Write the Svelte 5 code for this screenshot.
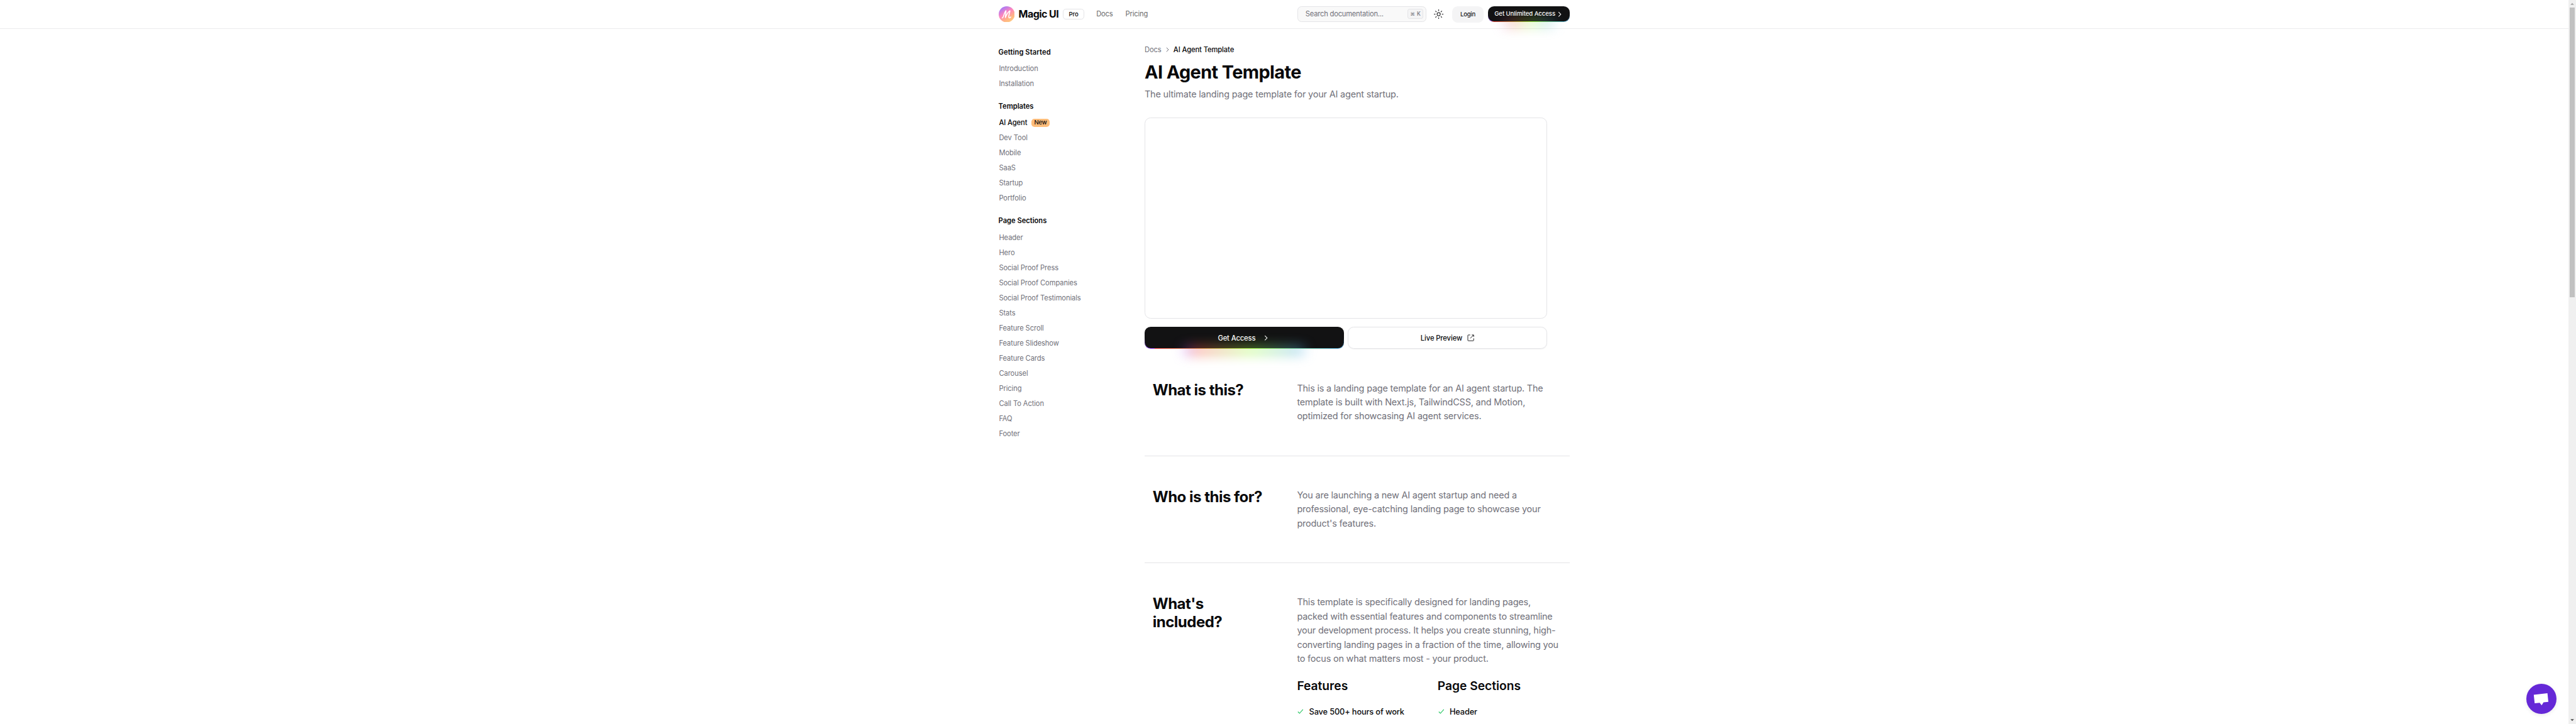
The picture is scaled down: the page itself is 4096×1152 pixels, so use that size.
<script>
  const groups = [
    { title: 'Getting Started', cls: 'loose', items: ['Introduction', 'Installation'] },
    { title: 'Templates', cls: '', items: ['AI Agent', 'Dev Tool', 'Mobile', 'SaaS', 'Startup', 'Portfolio'] },
    {
      title: 'Page Sections',
      cls: '',
      items: [
        'Header', 'Hero', 'Social Proof Press', 'Social Proof Companies', 'Social Proof Testimonials',
        'Stats', 'Feature Scroll', 'Feature Slideshow', 'Feature Cards', 'Carousel', 'Pricing',
        'Call To Action', 'FAQ', 'Footer'
      ]
    }
  ];

  const sections = [
    {
      title: ['What is this?'],
      lines: [
        'This is a landing page template for an AI agent startup. The',
        'template is built with Next.js, TailwindCSS, and Motion,',
        'optimized for showcasing AI agent services.'
      ]
    },
    {
      title: ['Who is this for?'],
      lines: [
        'You are launching a new AI agent startup and need a',
        'professional, eye-catching landing page to showcase your',
        "product's features."
      ]
    },
    {
      title: ["What's", 'included?'],
      lines: [
        'This template is specifically designed for landing pages,',
        'packed with essential features and components to streamline',
        'your development process. It helps you create stunning, high-',
        'converting landing pages in a fraction of the time, allowing you',
        'to focus on what matters most - your product.'
      ],
      columns: [
        { title: 'Features', item: 'Save 500+ hours of work' },
        { title: 'Page Sections', item: 'Header' }
      ]
    }
  ];
</script>

<div class="screen">
  <div class="page">
    <header>
      <div class="wrap bar">
        <svg class="logo" viewBox="0 0 32 32">
          <defs>
            <linearGradient id="brand" x1="0.15" y1="0.05" x2="0.75" y2="1">
              <stop offset="0" stop-color="#9c78ff" />
              <stop offset="0.42" stop-color="#ff86bd" />
              <stop offset="0.75" stop-color="#ffb583" />
              <stop offset="1" stop-color="#ffcb80" />
            </linearGradient>
          </defs>
          <circle cx="16" cy="16" r="16" fill="url(#brand)" />
          <path
            d="M7 23.2C8.2 23.4 9.2 21 10.3 17.6C11.5 13.8 12.6 10 14.4 8.8C14.7 12.8 13.2 18 13.3 22.6C15.2 17.6 18.2 11.6 22.3 9C22.2 12.6 19.2 19 20.2 22.2C20.8 23.8 22.8 22.9 24 21.2"
            fill="none" stroke="#fff" stroke-width="1.9" stroke-linecap="round" stroke-linejoin="round" />
        </svg>
        <span class="brand">Magic UI</span>
        <span class="pro">Pro</span>
        <nav>
          <span>Docs</span>
          <span>Pricing</span>
        </nav>
        <div class="search">
          <span>Search documentation...</span>
          <kbd><i>⌘</i>K</kbd>
        </div>
        <svg class="sun" viewBox="-12 -12 24 24">
          <circle r="3.2" />
          <path d="M0-9.4V-6.4M0 9.4V6.4M-9.4 0H-6.4M9.4 0H6.4M-6.5-6.5-4.3-4.3M6.5 6.5 4.3 4.3M-6.5 6.5-4.3 4.3M6.5-6.5 4.3-4.3" />
        </svg>
        <span class="login">Login</span>
        <div class="rainbow small">
          <span>Get Unlimited Access</span>
          <svg viewBox="0 0 8 12"><path d="M1.5 1.5 6 6 1.5 10.5" /></svg>
        </div>
      </div>
    </header>

    <div class="wrap body">
      <aside>
        {#each groups as g}
          <section class="group">
            <h4 class={g.cls}>{g.title}</h4>
            {#each g.items as item}
              <div class="link" class:active={item === 'AI Agent'}>
                <span>{item}</span>
                {#if item === 'AI Agent'}<b>New</b>{/if}
              </div>
            {/each}
          </section>
        {/each}
      </aside>

      <main>
        <div class="crumbs">
          <span>Docs</span>
          <svg viewBox="0 0 6 10"><path d="M1 1 5 5 1 9" /></svg>
          <strong>AI Agent Template</strong>
        </div>
        <h1>AI Agent Template</h1>
        <p class="lead">The ultimate landing page template for your AI agent startup.</p>
        <div class="preview"></div>
        <div class="actions">
          <div class="rainbow">
            <span>Get Access</span>
            <svg viewBox="0 0 8 12"><path d="M1.5 1.5 6 6 1.5 10.5" /></svg>
          </div>
          <div class="live">
            <span>Live Preview</span>
            <svg viewBox="0 0 14 14"><path d="M6 1.2H2.3Q1.2 1.2 1.2 2.3V11.7Q1.2 12.8 2.3 12.8H11.7Q12.8 12.8 12.8 11.7V8M9 1.2H12.8V5M12.8 1.2 6 8" /></svg>
          </div>
        </div>

        {#each sections as s}
          <section class="block">
            <h2>{#each s.title as t}<span>{t}</span>{/each}</h2>
            <div class="copy">
              {#each s.lines as l}<p>{l}</p>{/each}
              {#if s.columns}
                <div class="columns">
                  {#each s.columns as c}
                    <div>
                      <h3>{c.title}</h3>
                      <div class="check">
                        <svg viewBox="0 0 12 10"><path d="M1 5.6 4.2 8.8 11 1" /></svg>
                        <span>{c.item}</span>
                      </div>
                    </div>
                  {/each}
                </div>
              {/if}
            </div>
          </section>
        {/each}
      </main>
    </div>
  </div>

  <div class="scrollbar">
    <svg viewBox="0 0 15 15"><path d="M4 9.7H11L7.5 6Z" fill="#a3a3a3" /></svg>
    <div class="thumb"></div>
    <svg viewBox="0 0 15 15"><path d="M4 5.3H11L7.5 9Z" fill="#505050" /></svg>
  </div>

  <div class="chat">
    <svg viewBox="0 0 60 60"><path d="M14.8 21.8 42 18.8 43.8 35.9 34.2 37 30.5 42.8 26.6 37.8 16.6 38.9Z" fill="#fff" /></svg>
  </div>
</div>

<style>
  :global(html),
  :global(body) {
    margin: 0;
    background: #fff;
    overflow: hidden;
  }
  .screen {
    zoom: 0.8;
    position: relative;
    display: flex;
    width: 5120px;
    height: 1440px;
    overflow: hidden;
    background: #fff;
    color: #09090b;
    font-family: Inter, 'Liberation Sans', sans-serif;
    font-size: 14px;
    line-height: 20px;
    white-space: nowrap;
  }
  .page {
    flex: 1;
    min-width: 0;
  }
  .wrap {
    width: 1136px;
    margin: 0 auto;
    display: flex;
  }
  svg {
    display: block;
    flex: none;
  }
  h1, h2, h3, h4, p {
    margin: 0;
  }

  header {
    height: 56px;
    border-bottom: 1px solid #ececed;
  }
  .bar {
    height: 56px;
    align-items: center;
  }
  .logo {
    width: 32px;
    height: 32px;
  }
  .brand {
    margin-left: 8px;
    width: 80px;
    font-size: 20px;
    font-weight: 700;
    letter-spacing: -0.0347em;
  }
  .pro {
    box-sizing: border-box;
    margin-left: 8.5px;
    width: 42px;
    height: 22px;
    border: 1px solid #e4e4e7;
    border-radius: 6px;
    text-align: center;
    font-size: 12px;
    font-weight: 500;
  }
  nav {
    display: flex;
    gap: 25px;
    margin-left: 24px;
    color: #6c6c6d;
    letter-spacing: -0.016em;
  }
  .search {
    box-sizing: border-box;
    display: flex;
    align-items: center;
    justify-content: space-between;
    width: 256px;
    height: 32px;
    margin-left: auto;
    padding: 0 4.5px 0 15px;
    border: 1px solid #e4e4e7;
    border-radius: 8px;
    background: #f9f9f9;
    color: #71717a;
    letter-spacing: -0.02em;
  }
  kbd {
    box-sizing: border-box;
    display: flex;
    align-items: center;
    justify-content: center;
    gap: 4px;
    width: 31px;
    height: 20px;
    border: 1px solid #e4e4e7;
    border-radius: 4px;
    background: #f4f4f5;
    font: 500 10.5px 'Inter', sans-serif;
    letter-spacing: 0;
  }
  kbd i {
    font: normal 9px 'DejaVu Sans', sans-serif;
  }
  .sun {
    width: 24px;
    height: 24px;
    margin: 0 14px 0 13.5px;
    fill: none;
    stroke: #18181b;
    stroke-width: 1.3;
  }
  .login {
    width: 63px;
    height: 33px;
    margin-top: 1px;
    border-radius: 11px;
    background: #f4f4f5;
    color: #18181b;
    text-align: center;
    font-size: 12px;
    font-weight: 500;
    line-height: 32px;
    letter-spacing: -0.0285em;
  }

  .rainbow {
    position: relative;
    box-sizing: border-box;
    display: flex;
    flex: none;
    align-items: center;
    justify-content: center;
    gap: 17px;
    width: 396px;
    height: 44px;
    padding-right: 5px;
    border: 1.28px solid transparent;
    border-radius: 12px;
    color: #fafafa;
    font-weight: 500;
    letter-spacing: -0.0105em;
    background:
      linear-gradient(#121213, #121213) padding-box,
      linear-gradient(#121213 50%, rgba(18, 18, 19, 0.6) 80%, rgba(18, 18, 19, 0)) border-box,
      linear-gradient(90deg, hsl(0 100% 63%), hsl(90 100% 63%), hsl(210 100% 63%), hsl(195 100% 63%), hsl(270 100% 63%)) border-box;
    background-size: 200%;
    background-position: -5% 0;
  }
  .rainbow::before {
    content: '';
    position: absolute;
    left: 20%;
    bottom: -20%;
    width: 60%;
    height: 20%;
    background: linear-gradient(90deg, hsl(0 100% 63%), hsl(90 100% 63%), hsl(210 100% 63%), hsl(195 100% 63%), hsl(270 100% 63%));
    background-size: 200%;
    background-position: -5% 0;
    filter: blur(12.8px);
  }
  .rainbow > * {
    position: relative;
  }
  .rainbow svg {
    width: 8px;
    height: 12px;
    fill: none;
    stroke: #fafafa;
    stroke-width: 1.3;
  }
  .small {
    width: 163.5px;
    height: 32px;
    margin-left: 8px;
    padding-right: 3px;
    gap: 5px;
    font-size: 12px;
    letter-spacing: -0.0084em;
  }

  aside {
    width: 290.5px;
    padding-top: 36px;
  }
  .group {
    margin-bottom: 20px;
  }
  h4 {
    margin-bottom: 8px;
    font-size: 14px;
    font-weight: 600;
    letter-spacing: -0.0024em;
  }
  .loose {
    letter-spacing: 0.0071em;
  }
  .link {
    display: flex;
    align-items: center;
    gap: 8px;
    height: 30px;
    padding-left: 1px;
    color: #71717a;
    letter-spacing: -0.0093em;
  }
  .active {
    color: #09090b;
    font-weight: 500;
  }
  .link b {
    width: 37px;
    height: 16px;
    border-radius: 6px;
    background: #ffbd7a;
    text-align: center;
    font-size: 12px;
    font-weight: 500;
    line-height: 16px;
    letter-spacing: -0.0243em;
  }

  main {
    flex: 1;
    padding-top: 32px;
  }
  .crumbs {
    display: flex;
    align-items: center;
    color: #71717a;
    letter-spacing: -0.0096em;
  }
  .crumbs svg {
    width: 6px;
    height: 10px;
    margin: 0 9px;
    fill: none;
    stroke: #71717a;
    stroke-width: 1.25;
  }
  .crumbs strong {
    color: #09090b;
    font-weight: 500;
  }
  h1 {
    margin-top: 15px;
    font-size: 36px;
    line-height: 40px;
    font-weight: 700;
    letter-spacing: -0.0196em;
  }
  .lead {
    margin-top: 9px;
    font-size: 18px;
    line-height: 28px;
    color: #71717a;
    letter-spacing: -0.011em;
  }
  .preview {
    box-sizing: border-box;
    width: 800px;
    height: 401px;
    margin-top: 32px;
    border: 1px solid #e4e4e7;
    border-radius: 12px;
  }
  .actions {
    display: flex;
    gap: 8px;
    width: 800px;
    margin-top: 16px;
  }
  .live {
    box-sizing: border-box;
    display: flex;
    flex: 1;
    align-items: center;
    justify-content: center;
    gap: 10px;
    height: 44px;
    border: 1px solid #e4e4e7;
    border-radius: 12px;
    box-shadow: 0 1px 2px rgba(0, 0, 0, 0.05);
    font-weight: 500;
    letter-spacing: -0.0086em;
  }
  .live svg {
    width: 14px;
    height: 14px;
    fill: none;
    stroke: #09090b;
    stroke-width: 1.1;
  }

  .block {
    display: flex;
    margin-bottom: -0.25px;
    padding: 64px 16px;
    border-bottom: 1px solid #e4e4e7;
  }
  h2 {
    width: 287px;
    font-size: 30px;
    line-height: 36px;
    font-weight: 700;
    letter-spacing: -0.021em;
  }
  h2 span {
    display: block;
  }
  .copy {
    flex: 1;
  }
  .copy p {
    font-size: 18px;
    line-height: 28px;
    color: #71717a;
    letter-spacing: -0.0122em;
  }
  .columns {
    display: grid;
    grid-template-columns: 1fr 1fr;
    gap: 32px;
    margin-top: 24px;
  }
  h3 {
    font-size: 24px;
    line-height: 32px;
    font-weight: 600;
  }
  .check {
    display: flex;
    align-items: center;
    gap: 11px;
    margin-top: 23px;
    padding-left: 1px;
    font-size: 16px;
    line-height: 24px;
    font-weight: 500;
    letter-spacing: -0.0115em;
  }
  .check svg {
    width: 12px;
    height: 10px;
    fill: none;
    stroke: #22c55e;
    stroke-width: 1.4;
  }

  .scrollbar {
    display: flex;
    flex-direction: column;
    width: 15px;
    background: #f0f0f0;
  }
  .scrollbar svg {
    width: 15px;
    height: 15px;
  }
  .thumb {
    height: 576px;
    margin: 0 2px auto;
    background: #c1c1c1;
  }
  .chat {
    position: absolute;
    right: 39px;
    bottom: 20px;
    width: 60px;
    height: 60px;
    border-radius: 50%;
    background: #6528d7;
    box-shadow: 0 2px 8px rgba(0, 0, 0, 0.09);
  }
</style>
